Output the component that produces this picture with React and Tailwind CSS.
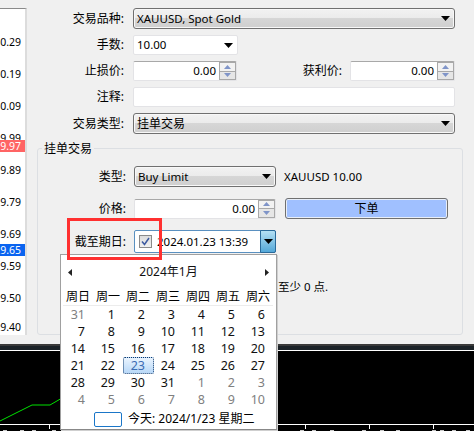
const FONT = { fontFamily: '"Noto Sans","Noto Sans CJK SC",sans-serif' };
const CJK = { fontFamily: '"Noto Sans CJK SC",sans-serif' };

const Arrow = ({ className = "" }) => (
  <svg width="9" height="5" viewBox="0 0 9 5" className={className}><path d="M0 0h9L4.5 5z" fill="#000" /></svg>
);

function Select({ children, className = "" }) {
  return (
    <div className={`h-[21px] flex items-center justify-between pl-[3px] pr-[4px] border border-[#707070] rounded-[3px] shadow-[inset_0_0_0_1px_#f8f8f8] bg-[linear-gradient(#f2f2f2_0%,#ebebeb_48%,#d6d6d6_50%,#cfcfcf_100%)] ${className}`}>
      <span>{children}</span>
      <Arrow />
    </div>
  );
}

function Spin() {
  return (
    <div className="w-[17px] shrink-0 self-stretch flex flex-col border border-[#a8a8a8] bg-[#e8e8e8]">
      <div className="flex-1 flex items-center justify-center border-b border-[#a8a8a8] bg-[#f2f2f2]">
        <svg width="7" height="4" viewBox="0 0 7 4"><path d="M0 4L3.5 0L7 4z" fill="#7f94c8" /></svg>
      </div>
      <div className="flex-1 flex items-center justify-center bg-[#e6e6e6]">
        <svg width="7" height="4" viewBox="0 0 7 4"><path d="M0 0L7 0L3.5 4z" fill="#7f94c8" /></svg>
      </div>
    </div>
  );
}

function SpinInput({ className = "" }) {
  return (
    <div className={`h-[20px] flex items-center text-[11.5px] bg-white border border-[#e3e3e6] border-t-[#a8a8a8] rounded-[2px] ${className}`}>
      <span className="flex-1 text-right pr-[3px]">0.00</span>
      <Spin />
    </div>
  );
}

const Label = ({ children, className = "" }) => (
  <span className={`text-right shrink-0 text-[12px] ${className}`}>{children}</span>
);

const prices = [
  { v: "30.29", h: 32, mt: 33 },
  { v: "30.19", h: 32 },
  { v: "30.09", h: 32 },
  { v: "29.99", h: 8 },
  { v: "29.97", h: 24, c: "red" },
  { v: "29.89", h: 32 },
  { v: "29.79", h: 32 },
  { v: "29.69", h: 16 },
  { v: "29.65", h: 16, c: "blue" },
  { v: "29.59", h: 32 },
  { v: "29.50", h: 29 },
  { v: "29.40", h: 12 },
];

function PriceColumn() {
  return (
    <div className="w-[27px] h-[327px] mt-[8px] bg-white border-t border-t-[#8a8a8a] border-r-2 border-r-[#dcdcdc] overflow-hidden shrink-0 text-[10.5px]">
      {prices.map((p) => (
        <div key={p.v} style={{ height: p.h, marginTop: p.mt || 0 }} className="relative">
          <div
            className={`absolute left-0 top-[-6px] w-[25px] h-[12px] leading-[12px] overflow-hidden ${
              p.c === "red" ? "bg-[#ff6464] text-white z-10" : p.c === "blue" ? "bg-[#0a64f0] text-white z-10" : "text-black"
            }`}
          >
            <span className="block w-[30px] ml-[-9px] text-right">{p.v}</span>
          </div>
        </div>
      ))}
    </div>
  );
}

const cols = ["周日", "周一", "周二", "周三", "周四", "周五", "周六"];
const days = [
  [31, 1], [1, 0], [2, 0], [3, 0], [4, 0], [5, 0], [6, 0],
  [7, 0], [8, 0], [9, 0], [10, 0], [11, 0], [12, 0], [13, 0],
  [14, 0], [15, 0], [16, 0], [17, 0], [18, 0], [19, 0], [20, 0],
  [21, 0], [22, 0], [23, 2], [24, 0], [25, 0], [26, 0], [27, 0],
  [28, 0], [29, 0], [30, 0], [31, 0], [1, 1], [2, 1], [3, 1],
  [4, 1], [5, 1], [6, 1], [7, 1], [8, 1], [9, 1], [10, 1],
];

function Calendar() {
  return (
    <div className="absolute left-[60px] top-[254px] w-[217px] h-[176px] z-20 bg-white border border-[#a0a0a0] border-b-[#888888] shadow-[1px_1px_0_#cfcfcf] flex flex-col">
      <div className="h-[34px] flex items-center justify-between pl-[7px] pr-[7px] text-[12px]">
        <svg width="4" height="7" viewBox="0 0 4 7"><path d="M4 0v7L0 3.5z" fill="#222" /></svg>
        <span className="text-[#111]">2024年1月</span>
        <svg width="4" height="7" viewBox="0 0 4 7"><path d="M0 0v7L4 3.5z" fill="#222" /></svg>
      </div>
      <div className="ml-[2px] grid grid-cols-[repeat(7,30px)] w-[210px] h-[17px] border-b border-[#ececec] text-[12px] leading-[15px] text-center">
        {cols.map((c) => <span key={c}>{c}</span>)}
      </div>
      <div className="ml-[2px] grid grid-cols-[repeat(7,30px)] auto-rows-[17px] text-[12.5px]">
        {days.map(([d, s], i) => (
          <div key={i} className="relative h-[17px] leading-[17px] text-right pr-[8px]">
            {s === 2 && (
              <div className="absolute left-0 right-[-1px] top-0 bottom-0 rounded-[2px] border border-dotted border-[#0f3a6e] bg-[linear-gradient(#eaf4fe,#b8d8f8)]" />
            )}
            <span className={`relative ${s === 1 ? "text-[#808080]" : s === 2 ? "text-[#3c6cb4]" : "text-[#111]"}`}>{d}</span>
          </div>
        ))}
      </div>
      <div className="flex items-center mt-[2px] pl-[33px] text-[12px]">
        <div className="w-[28px] h-[15px] border border-[#1a76c8] rounded-[2px] shrink-0" />
        <span className="ml-[6px] whitespace-nowrap">今天: 2024/1/23 星期二</span>
      </div>
    </div>
  );
}

function Chart() {
  return (
    <div className="h-[87px] flex flex-col overflow-hidden">
      <div className="h-[2px] bg-[#3a3a3a]" />
      <div className="h-[4px] bg-[#1c2328]" />
      <div className="h-[1px] bg-white" />
      <svg className="block w-[474px] h-[80px] bg-black shrink-0" viewBox="0 0 474 80">
        <path d="M0 70L32 54L50 54L62 47" fill="none" stroke="#00e000" strokeWidth="1" />
        <path d="M0 73.5H474" stroke="#fff" strokeWidth="1" />
        {[49, 113, 177, 241, 305, 369, 433].map((x) => (
          <path key={x} d={`M${x + 0.5} 74V78`} stroke="#fff" strokeWidth="1" />
        ))}
        {[3, 20, 32, 52, 300, 312, 330, 362, 380, 396, 432, 440, 452, 466].map((x) => (
          <path key={x} d={`M${x} 79.5H${x + 4}`} stroke="#c8c8c8" strokeWidth="1" />
        ))}
      </svg>
    </div>
  );
}

export default function App() {
  return (
    <div className="relative w-[474px] h-[431px] overflow-hidden bg-[#f0f0f0] text-black text-[11.5px]" style={FONT}>
      <div className="h-[344px] flex">
        <PriceColumn />
        <div className="w-[447px] pt-[8px]">
          <div className="flex items-center gap-[9px]">
            <Label className="w-[97px]">交易品种:</Label>
            <Select className="w-[322px]">XAUUSD, Spot Gold</Select>
          </div>
          <div className="flex items-center gap-[9px] mt-[6px]">
            <Label className="w-[97px]">手数:</Label>
            <div className="w-[105px] h-[20px] flex items-center justify-between bg-white border border-[#e3e3e6] rounded-[2px] pl-[3px] pr-[4px]">
              <span>10.00</span>
              <Arrow />
            </div>
          </div>
          <div className="flex items-center gap-[9px] mt-[6px]">
            <Label className="w-[97px]">止损价:</Label>
            <SpinInput className="w-[104px]" />
            <Label className="w-[96px]">获利价:</Label>
            <SpinInput className="w-[105px] ml-[-1px]" />
          </div>
          <div className="flex items-center gap-[9px] mt-[6px]">
            <Label className="w-[97px]">注释:</Label>
            <div className="w-[322px] h-[20px] bg-white border border-[#e3e3e6] rounded-[2px]" />
          </div>
          <div className="flex items-center gap-[9px] mt-[6px]">
            <Label className="w-[97px]">交易类型:</Label>
            <Select className="w-[322px]"><span className="text-[12px]" style={CJK}>挂单交易</span></Select>
          </div>

          <div className="relative ml-[10px] mt-[14px] w-[426px] h-[187px] border border-[#dcdfe3] rounded-[3px] pt-[17px]">
            <span className="absolute left-[4px] top-[-7px] px-[2px] bg-[#f0f0f0] text-[12px] leading-[14px]">挂单交易</span>
            <div className="flex items-center gap-[8px]">
              <Label className="w-[88px]">类型:</Label>
              <Select className="w-[142px]">Buy Limit</Select>
              <span>XAUUSD 10.00</span>
            </div>
            <div className="flex items-center gap-[8px] mt-[11px]">
              <Label className="w-[88px]">价格:</Label>
              <SpinInput className="w-[142px]" />
              <button className="ml-[1px] w-[163px] h-[21px] border border-[#707070] rounded-[3px] bg-[#a0c0ff] shadow-[inset_0_0_0_1px_#e8eef8] text-[12px]">下单</button>
            </div>
            <div className="flex items-center gap-[8px] mt-[11px]">
              <Label className="w-[88px]">截至期日:</Label>
              <div className="w-[142px] h-[23px] flex items-center bg-white border border-[#5a90c0] rounded-[2px]">
                <div className="ml-[4px] w-[13px] h-[13px] border border-[#8a8a8a] bg-[linear-gradient(#dcdcdc,#f0f0f0)] flex items-center justify-center shrink-0">
                  <svg width="9" height="9" viewBox="0 0 9 9"><path d="M1 4.5L3.5 7.5L8 1" fill="none" stroke="#3c5aa0" strokeWidth="1.5" /></svg>
                </div>
                <span className="ml-[5px] flex-1">2024.01.23 13:39</span>
                <div className="w-[16px] h-[23px] -mr-px flex items-center justify-center border border-[#2a6a9a] rounded-r-[2px] bg-[linear-gradient(#b4e0f4,#54a8d8)]">
                  <Arrow />
                </div>
              </div>
            </div>
            <div className="mt-[25px] pl-[240px] whitespace-nowrap">至少 0 点.</div>
          </div>
        </div>
      </div>
      <Chart />
      <Calendar />
      <div className="absolute left-[67px] top-[218px] w-[95px] h-[42px] border-[3px] border-[#ff3030] z-30" />
    </div>
  );
}
